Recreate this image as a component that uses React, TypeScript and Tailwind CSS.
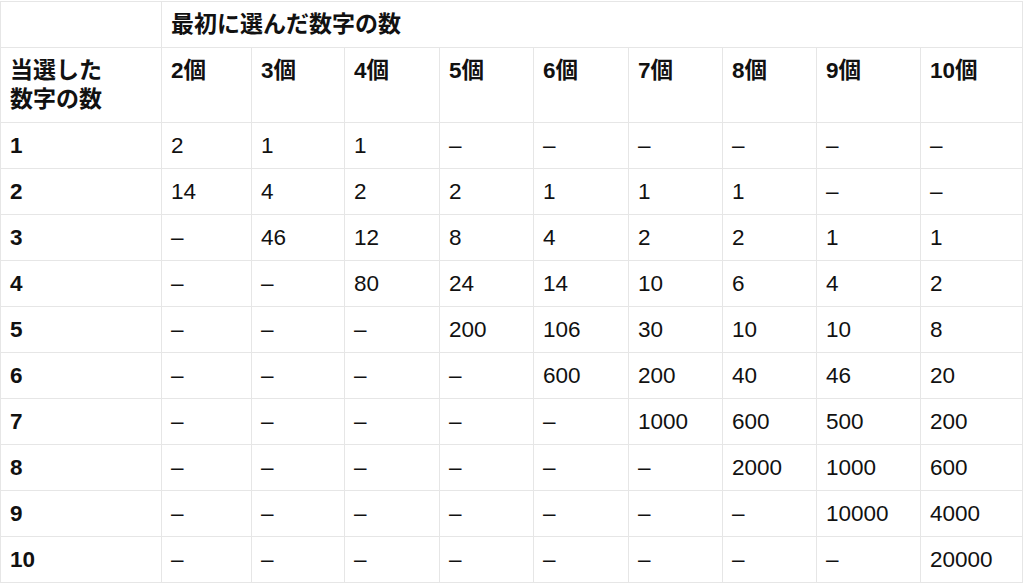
const COLS = ["2個", "3個", "4個", "5個", "6個", "7個", "8個", "9個", "10個"];
const WIDTHS = [161, 90, 93, 95, 94, 95, 94, 94, 104, 102];

const D = "–";
const ROWS: string[][] = [
  ["1", "2", "1", "1", D, D, D, D, D, D],
  ["2", "14", "4", "2", "2", "1", "1", "1", D, D],
  ["3", D, "46", "12", "8", "4", "2", "2", "1", "1"],
  ["4", D, D, "80", "24", "14", "10", "6", "4", "2"],
  ["5", D, D, D, "200", "106", "30", "10", "10", "8"],
  ["6", D, D, D, D, "600", "200", "40", "46", "20"],
  ["7", D, D, D, D, D, "1000", "600", "500", "200"],
  ["8", D, D, D, D, D, D, "2000", "1000", "600"],
  ["9", D, D, D, D, D, D, D, "10000", "4000"],
  ["10", D, D, D, D, D, D, D, D, "20000"],
];

const cell = "border border-[#e6e6e6] px-[9px] py-[8px] align-top text-left";

export default function App() {
  return (
    <div
      className="bg-white w-[1024px] h-[584px] overflow-hidden pt-px text-[#111] text-[22.5px] leading-[29px]"
      style={{ fontFamily: '"Liberation Sans", "Noto Sans CJK JP", sans-serif' }}
    >
      <table className="table-fixed border-collapse w-[1022px]">
        <colgroup>
          {WIDTHS.map((w, i) => (
            <col key={i} style={{ width: w }} />
          ))}
        </colgroup>
        <thead>
          <tr>
            <th className={cell}></th>
            <th className={`${cell} font-bold text-[23px]`} colSpan={9}>
              最初に選んだ数字の数
            </th>
          </tr>
          <tr>
            <th className={`${cell} font-bold text-[23px]`}>
              当選した
              <br />
              数字の数
            </th>
            {COLS.map((c) => (
              <th key={c} className={`${cell} font-bold`}>
                {c}
              </th>
            ))}
          </tr>
        </thead>
        <tbody>
          {ROWS.map((row, r) => (
            <tr key={r}>
              {row.map((v, i) => (
                <td key={i} className={`${cell} ${i === 0 ? "font-bold" : "font-normal"}`}>
                  {v}
                </td>
              ))}
            </tr>
          ))}
        </tbody>
      </table>
    </div>
  );
}
